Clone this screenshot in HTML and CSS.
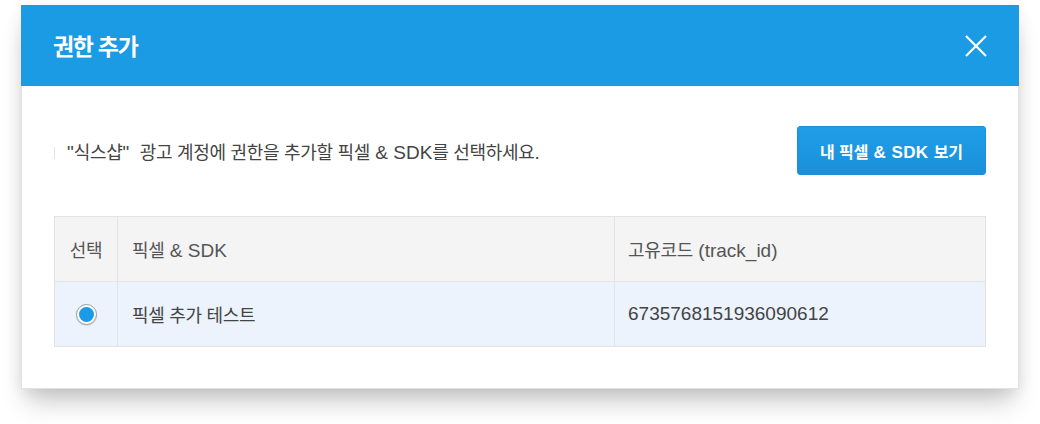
FILE: index.html
```html
<!DOCTYPE html>
<html lang="ko">
<head>
<meta charset="utf-8">
<title>권한 추가</title>
<link rel="stylesheet" href="styles.css">
</head>
<body>
<div class="page">
  <div class="modal">
    <div class="modal-header">
      <h1 class="title">권한 추가</h1>
      <button class="close" aria-label="닫기">
        <svg width="22" height="22" viewBox="0 0 22 22"><path d="M1 1 L21 21 M21 1 L1 21" stroke="#fff" stroke-width="2.2" fill="none"/></svg>
      </button>
    </div>
    <div class="modal-body">
      <div class="toolbar">
        <p class="intro"><span class="mark"></span>"<span class="k">식스샵</span>"&nbsp; <span class="k">광고 계정에 권한을 추가할 픽셀</span> &amp; SDK<span class="k">를 선택하세요</span>.</p>
        <button class="btn"><span class="bk">내 픽셀</span> &amp; SDK <span class="bk">보기</span></button>
      </div>
      <table class="grid">
        <thead>
          <tr>
            <th class="c-sel"><span class="k">선택</span></th>
            <th class="c-name"><span class="k">픽셀</span> &amp; SDK</th>
            <th class="c-id"><span class="k">고유코드</span> (track_id)</th>
          </tr>
        </thead>
        <tbody>
          <tr>
            <td class="c-sel"><span class="radio"><span class="dot"></span></span></td>
            <td class="c-name"><span class="k">픽셀 추가 테스트</span></td>
            <td class="c-id">6735768151936090612</td>
          </tr>
        </tbody>
      </table>
    </div>
  </div>
</div>
</body>
</html>
```

FILE: styles.css
```css
* { box-sizing: border-box; }
html, body { margin: 0; padding: 0; background: #ffffff; }
body {
  font-family: "Liberation Sans", "Noto Sans CJK KR", sans-serif;
  color: #444;
}
.page { padding: 5px 0 40px 21px; }
.modal {
  width: 998px;
  background: #fff;
  border: 1px solid #e2e2e2;
  border-top: none;
  box-shadow: 0 18px 24px -6px rgba(0, 0, 0, 0.22), 0 2px 14px rgba(0, 0, 0, 0.07);
}
.modal-header {
  height: 81px;
  background: #1b9be4;
  margin: 0 -1px;
  padding: 0 32px 0 32px;
  display: flex;
  align-items: center;
  justify-content: space-between;
}
.title {
  margin: 0;
  color: #fff;
  font-family: "Noto Sans CJK KR", sans-serif;
  font-size: 23px;
  font-weight: 700;
  letter-spacing: -1.3px;
  line-height: 1;
}
.close {
  background: none;
  border: 0;
  padding: 0;
  width: 22px;
  height: 22px;
  display: block;
}
.close svg { display: block; }
.modal-body { padding: 40px 32px 41px 32px; }
.toolbar {
  display: flex;
  align-items: center;
  justify-content: space-between;
  height: 49px;
}
.intro {
  margin: 4px 0 0 0;
  font-size: 19px;
  line-height: 24px;
  color: #444;
  display: flex;
  align-items: center;
  white-space: pre;
}
.mark {
  display: inline-block;
  width: 1px;
  height: 12px;
  background: #e4e4e4;
  margin-right: 12px;
}
.k {
  font-size: 18px;
  letter-spacing: -0.3px;
}
.btn {
  width: 189px;
  height: 49px;
  border: 1px solid #1a8ed6;
  border-radius: 3px;
  background: linear-gradient(#1f9ee8, #1a90da);
  color: #fff;
  font-family: "Liberation Sans", "Noto Sans CJK KR", sans-serif;
  font-weight: 700;
  font-size: 17px;
  letter-spacing: 0.4px;
  padding: 0;
}
.bk { font-size: 16px; letter-spacing: 0; }
.grid {
  width: 100%;
  margin-top: 41px;
  border-collapse: collapse;
  table-layout: fixed;
  font-size: 19px;
  color: #555;
}
.grid th, .grid td {
  border: 1px solid #e3e3e3;
  height: 65px;
  padding: 0 0 0 14px;
  text-align: left;
  font-weight: 400;
  vertical-align: middle;
}
.grid thead th { background: #f4f4f4; }
.grid tbody td { background: #ecf3fd; color: #444; }
.grid .c-sel { width: 63px; padding: 0; text-align: center; }
.grid .c-name { width: 497px; }
.grid .c-id { padding-left: 13px; }
.radio {
  display: inline-block;
  width: 21px;
  height: 21px;
  border-radius: 50%;
  border: 1px solid #9c9c9c;
  background: #fff;
  vertical-align: middle;
  position: relative;
  box-shadow: 0 1px 1px rgba(0,0,0,0.12);
}
.dot {
  position: absolute;
  left: 2px;
  top: 2px;
  width: 15px;
  height: 15px;
  border-radius: 50%;
  background: #1b9be6;
}
```
